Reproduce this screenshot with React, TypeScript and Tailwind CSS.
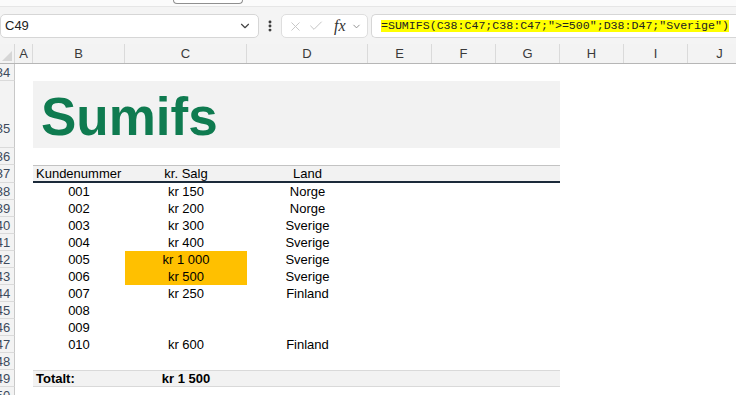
import React from 'react';
import { ChevronDown, X, Check, EllipsisVertical } from 'lucide-react';

const font = { fontFamily: '"Liberation Sans", Arial, sans-serif' };

const cols = [
  { id: 'A', w: 'w-[18px]' },
  { id: 'B', w: 'w-[92px]' },
  { id: 'C', w: 'w-[122px]' },
  { id: 'D', w: 'w-[121px]' },
  { id: 'E', w: 'w-[64px]' },
  { id: 'F', w: 'w-[64px]' },
  { id: 'G', w: 'w-[64px]' },
  { id: 'H', w: 'w-[64px]' },
  { id: 'I', w: 'w-[64px]' },
  { id: 'J', w: 'w-[64px]' },
];

const rows = [
  { n: '038', id: '001', salg: 'kr 150', land: 'Norge' },
  { n: '039', id: '002', salg: 'kr 200', land: 'Norge' },
  { n: '040', id: '003', salg: 'kr 300', land: 'Sverige' },
  { n: '041', id: '004', salg: 'kr 400', land: 'Sverige' },
  { n: '042', id: '005', salg: 'kr 1 000', land: 'Sverige', hit: true },
  { n: '043', id: '006', salg: 'kr 500', land: 'Sverige', hit: true },
  { n: '044', id: '007', salg: 'kr 250', land: 'Finland' },
  { n: '045', id: '008', salg: '', land: '' },
  { n: '046', id: '009', salg: '', land: '' },
  { n: '047', id: '010', salg: 'kr 600', land: 'Finland' },
];

const RowHead: React.FC<{ n: string; h: string; tall?: boolean }> = ({ n, h, tall }) => (
  <div className={`w-[15px] ${h} shrink-0 overflow-hidden bg-[#f3f3f3] border-r border-[#c8c8c8] border-b border-b-[#dadada] flex ${tall ? 'items-end pb-[10px]' : 'items-center'}`}>
    <div className="w-[30px] ml-[-12px] shrink-0 text-center text-[13px] text-[#3d4a5c]">{n.slice(1)}</div>
  </div>
);

const Row: React.FC<{ n: string; h?: string; tall?: boolean; children?: React.ReactNode }> = ({ n, h = 'h-[17px]', tall, children }) => (
  <div className={`flex ${h}`}>
    <RowHead n={n} h={h} tall={tall} />
    <div className="w-[18px] shrink-0" />
    {children}
  </div>
);

export default function App() {
  return (
    <div className="w-[736px] h-[395px] overflow-hidden bg-white text-black" style={font}>
      {/* top strip */}
      <div className="h-[7px] bg-[#fbfbfb] border-b border-[#e6e6e6]">
        <div className="ml-[173px] w-[70px] h-[4px] border border-t-0 border-[#8f8f8f] rounded-b-[4px] bg-white" />
      </div>

      {/* formula bar */}
      <div className="h-[37px] bg-[#f4f4f4] flex items-start pt-[7px]">
        <div className="w-[259px] h-[24px] bg-white border border-[#d6d6d6] rounded-[5px] flex items-center pl-[4px] pr-[6px]">
          <span className="text-[13px] text-[#222] flex-1">C49</span>
          <ChevronDown className="w-[14px] h-[14px] text-[#444]" strokeWidth={2} />
        </div>
        <div className="w-[22px] h-[24px] flex items-center justify-center">
          <EllipsisVertical className="w-[14px] h-[14px] text-[#333]" strokeWidth={3} />
        </div>
        <div className="w-[87px] h-[24px] bg-white border border-[#dedede] rounded-[5px] flex items-center pl-[6px] gap-[5px]">
          <X className="w-[15px] h-[15px] text-[#c4c4c4]" strokeWidth={1.5} />
          <Check className="w-[16px] h-[16px] text-[#c4c4c4]" strokeWidth={1.5} />
          <span className="ml-[5px] text-[16px] italic text-[#333]" style={{ fontFamily: '"Liberation Serif", "Times New Roman", serif' }}>fx</span>
          <ChevronDown className="w-[11px] h-[11px] text-[#888]" strokeWidth={2} />
        </div>
        <div className="ml-[3px] flex-1 h-[24px] bg-white border border-[#d6d6d6] rounded-l-[5px] border-r-0 flex items-center pl-[9px]">
          <span className="bg-[#ffff00] text-[#222] text-[11.6px] leading-[12px]" style={{ fontFamily: '"Liberation Mono", "Courier New", monospace' }}>
            =SUMIFS(C38:C47;C38:C47;"&gt;=500";D38:D47;"Sverige")
          </span>
        </div>
      </div>

      {/* column headers */}
      <div className="flex h-[20px] bg-[#f3f3f3] border-b border-[#b6b6b6]">
        <div className="w-[15px] shrink-0 border-r border-[#d8d8d8] flex items-end justify-end p-[2px]">
          <div className="w-0 h-0 border-l-[10px] border-l-transparent border-b-[10px] border-b-[#d6d6d6]" />
        </div>
        {cols.map((c) => (
          <div key={c.id} className={`${c.w} shrink-0 border-r border-[#dadada] text-center text-[13px] leading-[20px] text-[#3a3a3a]`}>
            {c.id}
          </div>
        ))}
      </div>

      {/* sheet */}
      <div className="text-[13px] leading-[17px]">
        <Row n="034" />
        <Row n="035" h="h-[67px]" tall>
          <div className="w-[527px] bg-[#f2f2f2] flex items-center pl-[8px] pt-[3px]">
            <span className="text-[53px] font-bold text-[#0f7b50] leading-none">Sumifs</span>
          </div>
        </Row>
        <Row n="036" />
        <Row n="037" h="h-[18px]">
          <div className="w-[527px] flex bg-[#f2f2f2] border-t border-[#c3c3c3] border-b-2 border-b-[#1b2a3a]">
            <div className="w-[92px] pl-[3px] leading-[15px]">Kundenummer</div>
            <div className="w-[122px] text-center leading-[15px]">kr. Salg</div>
            <div className="w-[121px] text-center leading-[15px]">Land</div>
          </div>
        </Row>
        {rows.map((r) => (
          <Row key={r.n} n={r.n}>
            <div className="w-[92px] text-center">{r.id}</div>
            <div className={`w-[122px] text-center ${r.hit ? 'bg-[#ffc000]' : ''}`}>{r.salg}</div>
            <div className="w-[121px] text-center">{r.land}</div>
          </Row>
        ))}
        <Row n="048" />
        <Row n="049">
          <div className="w-[527px] flex bg-[#f2f2f2] border-y border-[#d9d9d9] font-bold">
            <div className="w-[92px] pl-[3px] leading-[15px]">Totalt:</div>
            <div className="w-[122px] text-center leading-[15px]">kr 1 500</div>
          </div>
        </Row>
        <Row n="050" />
      </div>
    </div>
  );
}
